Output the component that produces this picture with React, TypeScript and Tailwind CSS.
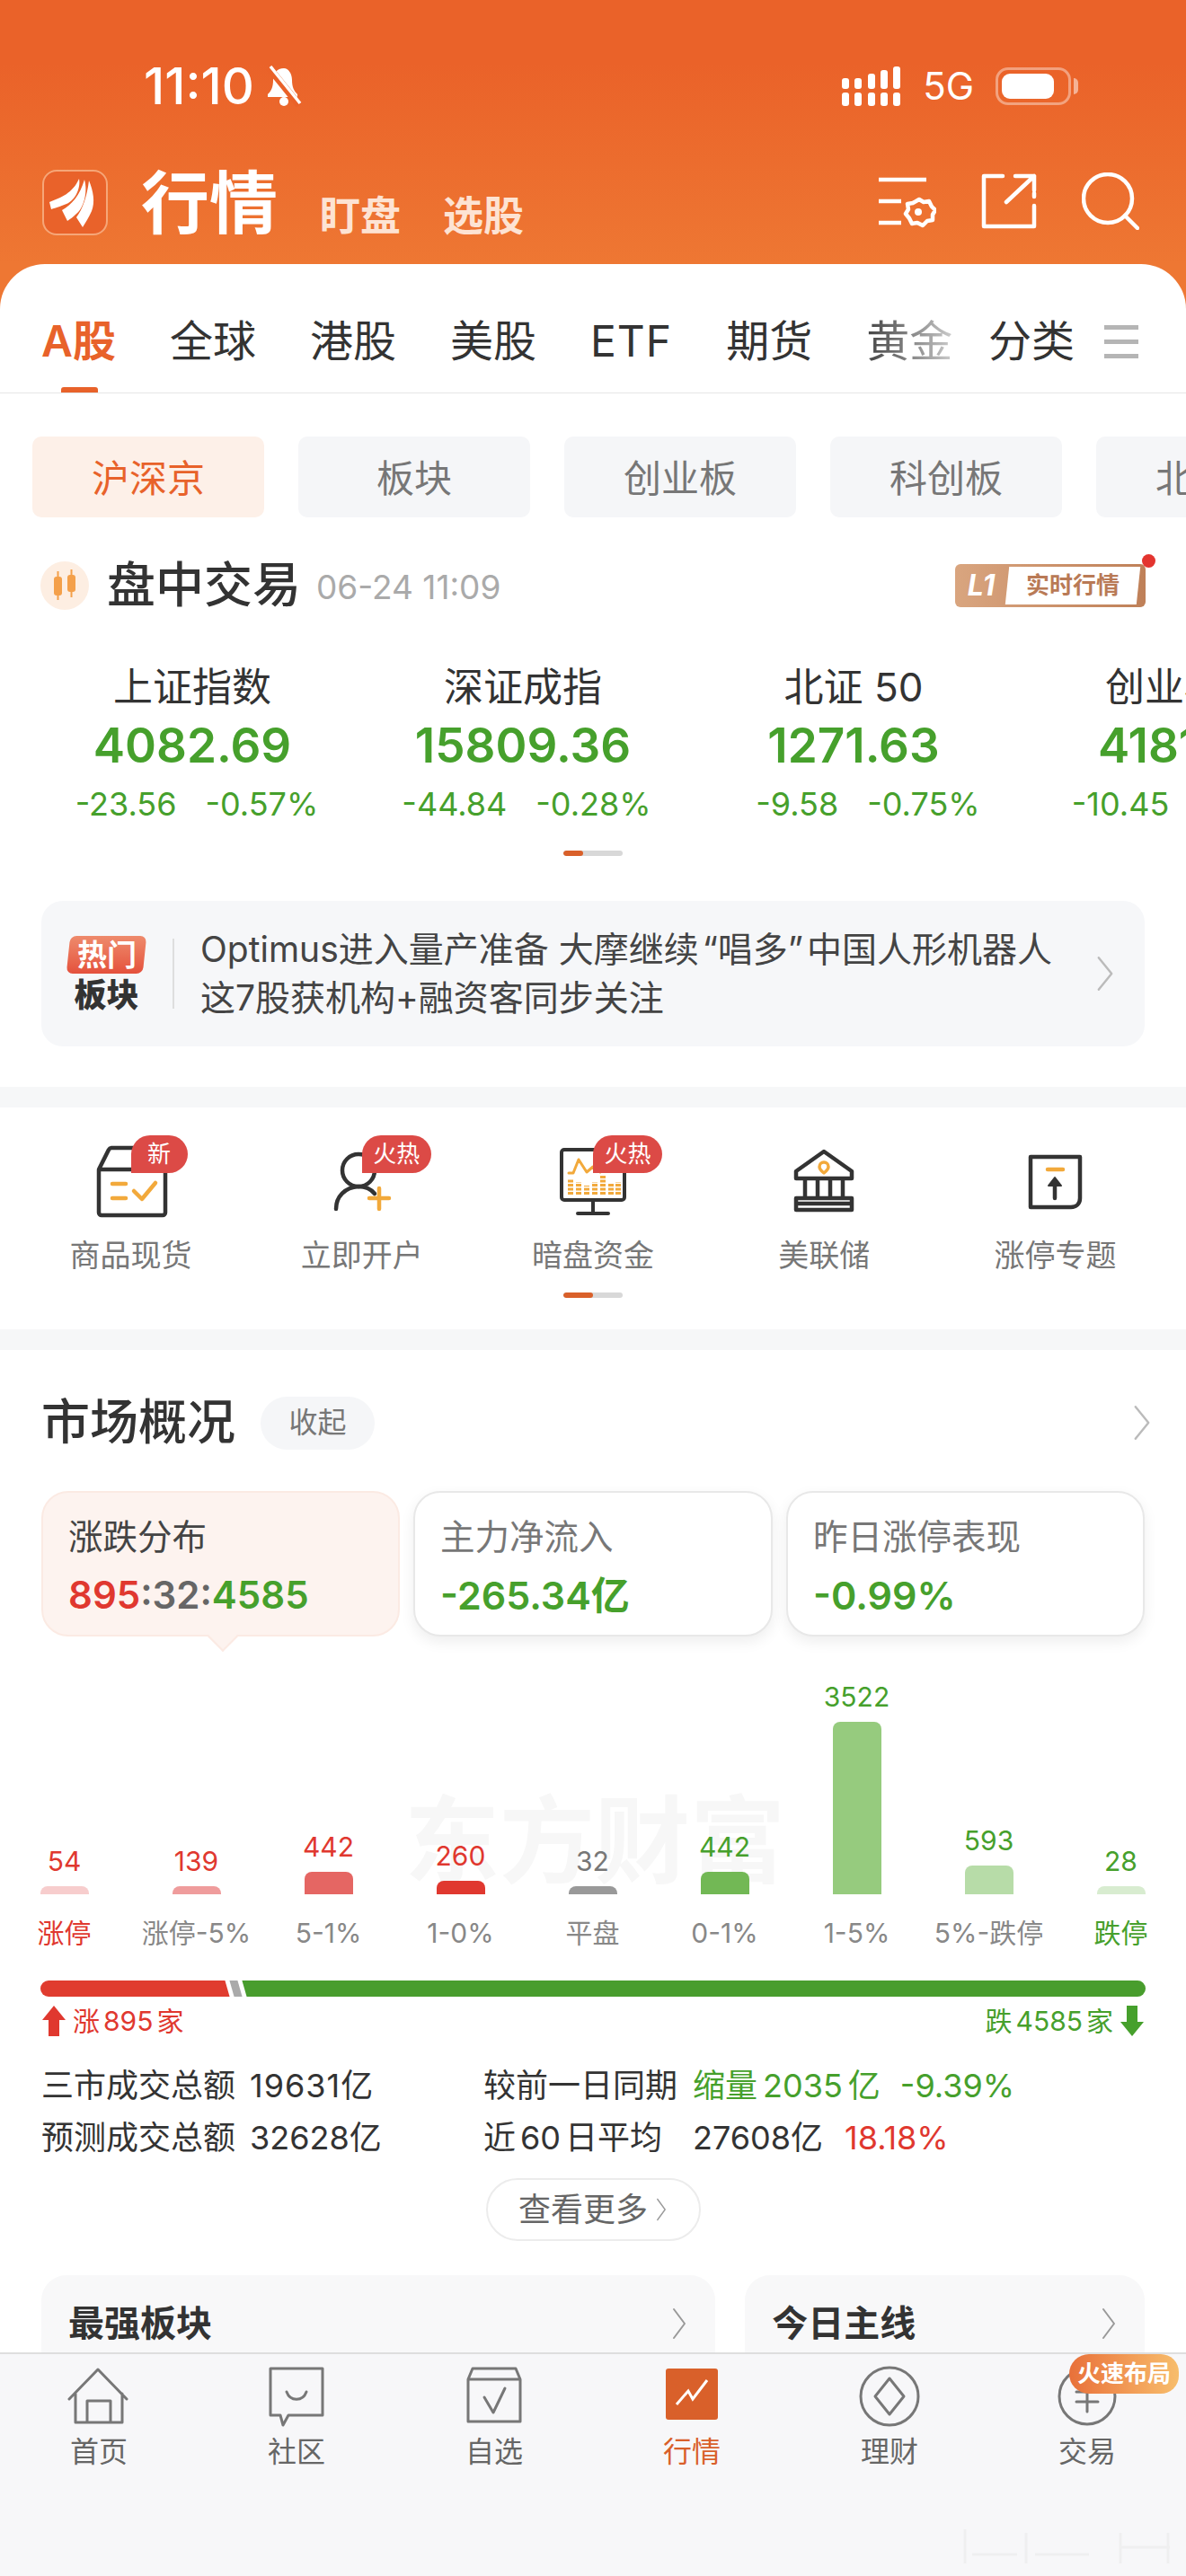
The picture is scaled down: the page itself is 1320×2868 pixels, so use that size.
import React from 'react';

const ChevronRight = ({ className = '' }: { className?: string }) => (
  <svg className={className} viewBox="0 0 20 36" fill="none" stroke="currentColor" strokeWidth="2" strokeLinecap="round" strokeLinejoin="round" preserveAspectRatio="none">
    <path d="M4 2l12 16L4 34" />
  </svg>
);

const Logo = () => (
  <div className="w-[73px] h-[73px] rounded-[16px] border-2 border-[#f6a678] bg-[#e9622a] flex items-center justify-center">
    <svg width="60" height="60" viewBox="0 0 60 60" fill="#fff">
      <path d="M1 29C14 24 27 19 34 3c2 10-4 24-14 28C13 34 6 36 3 37z" />
      <path d="M15 38c11-6 20-17 25-34 4 14-1 32-9 38-3 3-7 6-10 8z" />
      <path d="M31 46c7-9 12-24 14-41 5 12 7 24 3 34-3 7-7 13-10 18z" />
    </svg>
  </div>
);

const StatusBar = () => (
  <div className="h-[180px] pt-[68px] pl-[160px] pr-[120px] flex items-start justify-between text-white">
    <div className="flex items-center h-[56px]">
      <span className="text-[56px] font-medium leading-none">11:10</span>
      <svg className="ml-[10px]" width="46" height="46" viewBox="0 0 46 46" fill="#fff">
        <path d="M23 3c-8 0-12 6-12 13 0 8-2 12-6 16v3h33v-3c-4-4-6-8-6-16 0-7-4-13-9-13z" />
        <circle cx="23" cy="40" r="5" />
        <path d="M6 2l34 42" stroke="#ea6229" strokeWidth="8" />
        <path d="M8 1l33 41" stroke="#fff" strokeWidth="3.5" />
      </svg>
    </div>
    <div className="flex items-center h-[56px]">
      <svg width="66" height="46" viewBox="0 0 66 46" fill="#fff">
        <rect x="0" y="30" width="8" height="15" rx="3" />
        <rect x="0" y="14" width="8" height="12" rx="3" />
        <rect x="14" y="30" width="8" height="15" rx="3" />
        <rect x="14" y="14" width="8" height="12" rx="3" />
        <rect x="29" y="30" width="8" height="15" rx="3" />
        <rect x="29" y="9" width="8" height="17" rx="3" />
        <rect x="43" y="30" width="8" height="15" rx="3" />
        <rect x="43" y="5" width="8" height="21" rx="3" />
        <rect x="57" y="30" width="8" height="15" rx="3" />
        <rect x="57" y="1" width="8" height="25" rx="3" />
      </svg>
      <span className="ml-[24px] text-[42px] leading-none">5G</span>
      <div className="ml-[24px] w-[84px] h-[42px] rounded-[14px] border-[3px] border-white/40 p-[4px]">
        <div className="w-[58px] h-full rounded-[9px] bg-white" />
      </div>
      <div className="ml-[3px] w-[5px] h-[18px] rounded-r-full bg-white/50" />
    </div>
  </div>
);

const HeaderBar = () => (
  <div className="h-[114px] pt-[9px] pl-[47px] pr-[52px] flex items-start justify-between text-white">
    <div className="flex items-start">
      <Logo />
      <span className="ml-[37px] text-[76px] font-semibold leading-[74px]">行情</span>
      <span className="ml-[47px] mt-[27px] text-[45px] font-semibold leading-[50px] text-[#fde3d3]">盯盘</span>
      <span className="ml-[47px] mt-[27px] text-[45px] font-semibold leading-[50px] text-[#fde3d3]">选股</span>
    </div>
    <div className="flex items-center gap-[50px] h-[70px]">
      <svg width="66" height="64" viewBox="0 0 66 64" fill="none" stroke="#fff" strokeWidth="4.5">
        <path d="M2 8h53M2 32h25M2 56h25" />
        <path d="M47 30l5 3 6-1 3 6 4 4-3 5 0 6-6 1-5 5-6-3-6 1-3-6-4-5 3-5-1-6 6-1z" strokeLinejoin="round" />
        <circle cx="46" cy="44" r="4" fill="#fff" stroke="none" />
      </svg>
      <svg width="62" height="62" viewBox="0 0 62 62" fill="none" stroke="#fff" strokeWidth="4.5" strokeLinecap="round" strokeLinejoin="round">
        <path d="M24 3H3v56h56V36M59 26v-4M59 3L28 32M38 3h21v16" />
      </svg>
      <svg width="64" height="64" viewBox="0 0 64 64" fill="none" stroke="#fff" strokeWidth="4.5" strokeLinecap="round">
        <circle cx="29" cy="29" r="27" />
        <path d="M48 48l14 14" />
      </svg>
    </div>
  </div>
);

const MarketTabs = () => (
  <div className="relative h-[144px] rounded-t-[50px] bg-white border-b border-[#e6e6e6] pt-[58px] pl-[46px] overflow-hidden">
    <div className="flex items-center gap-[60px] h-[56px] text-[48px] leading-[56px] text-[#333]">
      <span className="font-semibold text-[#e8622a]">A股</span>
      <span>全球</span>
      <span>港股</span>
      <span>美股</span>
      <span className="tracking-[1px]">ETF</span>
      <span>期货</span>
      <span className="bg-gradient-to-r from-[#444] to-[#ccc] bg-clip-text text-transparent">黄金</span>
    </div>
    <div className="absolute right-0 top-[58px] h-[56px] w-[240px] bg-white flex items-center pl-[20px]">
      <span className="text-[48px] leading-[56px] text-[#333]">分类</span>
      <div className="ml-[33px] flex flex-col gap-[11px]">
        <div className="w-[38px] h-[5px] bg-[#b5b5b5]" />
        <div className="w-[38px] h-[5px] bg-[#b5b5b5]" />
        <div className="w-[38px] h-[5px] bg-[#b5b5b5]" />
      </div>
    </div>
    <div className="absolute left-[68px] bottom-0 w-[41px] h-[6px] rounded-t-[3px] bg-[#e8622a]" />
  </div>
);

const pills = ['沪深京', '板块', '创业板', '科创板', '北交所'];

const Pills = () => (
  <div className="mt-[48px] pl-[36px] flex gap-[38px] overflow-hidden">
    {pills.map((p, i) => (
      <div
        key={p}
        className={`w-[258px] h-[90px] pt-[3px] shrink-0 rounded-[10px] flex items-center justify-center text-[42px] ${
          i === 0 ? 'bg-[#fdf0e8] text-[#e8622a]' : 'bg-[#f5f6f8] text-[#777]'
        }`}
      >
        {p}
      </div>
    ))}
  </div>
);

const TradingHeader = () => (
  <div className="mt-[46px] h-[60px] pl-[45px] pr-[45px] flex items-center justify-between">
    <div className="flex items-center">
      <svg width="54" height="54" viewBox="0 0 54 54">
        <circle cx="27" cy="27" r="27" fill="#fdeee2" />
        <rect x="15" y="17" width="9" height="21" rx="3" fill="#f4a04a" />
        <rect x="18.5" y="11" width="2" height="32" fill="#f4a04a" />
        <rect x="30" y="15" width="9" height="19" rx="3" fill="#f4a04a" />
        <rect x="33.5" y="9" width="2" height="31" fill="#f4a04a" />
      </svg>
      <span className="ml-[20px] text-[54px] font-medium leading-[60px] text-[#333]">盘中交易</span>
      <span className="ml-[17px] mt-[4px] text-[37px] leading-[44px] text-[#aaa]">06-24 11:09</span>
    </div>
    <div className="relative w-[212px] h-[48px] rounded-[6px] bg-gradient-to-r from-[#d9a57f] to-[#bf8058] flex items-center">
      <span className="w-[58px] text-center text-[32px] font-bold italic text-white leading-none">L1</span>
      <div className="w-[146px] h-[42px] bg-white -skew-x-6 flex items-center justify-center">
        <span className="skew-x-6 text-[26px] font-semibold leading-none text-[#b97a56]">实时行情</span>
      </div>
      <div className="absolute -right-[11px] -top-[11px] w-[15px] h-[15px] rounded-full bg-[#e3342f]" />
    </div>
  </div>
);

const indices = [
  { name: '上证指数', value: '4082.69', a: '-23.56', b: '-0.57%', shift: 'pl-[10px]' },
  { name: '深证成指', value: '15809.36', a: '-44.84', b: '-0.28%', shift: 'pl-[8px]' },
  { name: '北证 50', value: '1271.63', a: '-9.58', b: '-0.75%', shift: 'pl-[32px]' },
  { name: '创业板指', value: '4181.67', a: '-10.45', b: '-0.25%', shift: 'pl-[18px]' },
];

const IndexRow = () => (
  <div className="mt-[58px] pl-[30px] flex overflow-hidden">
    {indices.map((x) => (
      <div key={x.name} className="w-[368px] shrink-0 flex flex-col items-center">
        <span className="h-[50px] text-[44px] leading-[50px] text-[#333] whitespace-nowrap">{x.name}</span>
        <span className="mt-[10px] h-[60px] text-[53px] font-semibold leading-[60px] text-[#46a02c]">{x.value}</span>
        <span className={`mt-[15px] h-[40px] text-[36px] leading-[40px] text-[#46a02c] flex gap-[32px] whitespace-nowrap ${x.shift}`}>
          <span>{x.a}</span>
          <span>{x.b}</span>
        </span>
      </div>
    ))}
  </div>
);

const Pager = ({ active, className = '' }: { active: string; className?: string }) => (
  <div className={`mx-auto w-[66px] h-[6px] rounded-full bg-[#d8d8d8] overflow-hidden ${className}`}>
    <div className={`h-full rounded-full bg-[#d9602a] ${active}`} />
  </div>
);

const HotBanner = () => (
  <div className="mt-[50px] mx-[46px] h-[162px] rounded-[24px] bg-[#f6f7f9] flex items-center pl-[30px] pr-[32px]">
    <div className="w-[85px] shrink-0 flex flex-col items-center">
      <div className="relative w-[85px] h-[42px] rounded-[7px] -skew-x-6 bg-gradient-to-b from-[#ee8a6c] to-[#e4503c] flex items-center justify-center">
        <span className="skew-x-6 text-[33px] font-bold leading-none text-white">热门</span>
      </div>
      <span className="mt-[5px] text-[36px] font-black leading-[38px] text-[#333]">板块</span>
    </div>
    <div className="ml-[31px] w-[2px] h-[78px] bg-[#dedede]" />
    <div className="ml-[29px] flex-1 text-[39px] leading-[54px] text-[#444]">
      <div>Optimus进入量产准备 大摩继续<span className="mx-[4px]">“唱多”</span>中国人形机器人</div>
      <div>这7股获机构+融资客同步关注</div>
    </div>
    <ChevronRight className="w-[24px] h-[40px] text-[#bbb]" />
  </div>
);

const Band = () => <div className="h-[23px] bg-[#f6f7f8]" />;

const BoxIcon = () => (
  <svg width="90" height="90" viewBox="0 0 90 90" fill="none" strokeWidth="4.5" strokeLinecap="round" strokeLinejoin="round">
    <path d="M9 32h74v48a3 3 0 0 1-3 3H12a3 3 0 0 1-3-3zM9 32l11-22a4 4 0 0 1 3-2h50" stroke="#333" />
    <path d="M24 48h15M24 64h15M48 56l9 9 15-18" stroke="#f2a93b" />
  </svg>
);

const PersonIcon = () => (
  <svg width="90" height="90" viewBox="0 0 90 90" fill="none" strokeWidth="4.5" strokeLinecap="round">
    <circle cx="41" cy="33" r="18" stroke="#333" />
    <path d="M16 76c0-14 10-24 25-25 7 0 14 3 18 8" stroke="#333" />
    <path d="M64 53v23M53 64h22" stroke="#f2a93b" />
  </svg>
);

const MonitorIcon = () => (
  <svg width="90" height="90" viewBox="0 0 90 90" fill="none" strokeWidth="4" strokeLinecap="round" strokeLinejoin="round">
    <rect x="10" y="10" width="70" height="56" rx="3" stroke="#333" />
    <path d="M45 66v14M28 81h34" stroke="#333" />
    <path d="M18 36h5l6-15 9 14 7-6 8 6" stroke="#f2a93b" strokeWidth="3" />
    <path d="M20 60V42M29 60V46M38 60V50M47 60V46M56 60V38M65 60V48M73 60V46" stroke="#f2a93b" strokeWidth="6" strokeDasharray="3 1.5" strokeLinecap="butt" />
  </svg>
);

const BankIcon = () => (
  <svg width="90" height="90" viewBox="0 0 90 90" fill="none" strokeWidth="4.5" strokeLinecap="round" strokeLinejoin="round">
    <path d="M45 12L14 34v8h62v-8zM24 42v22M38 42v22M52 42v22M66 42v22M14 64h62v13H14zM14 70h62" stroke="#333" />
    <path d="M45 24a5 5 0 0 1 5 5c0 3-5 7-5 7s-5-4-5-7a5 5 0 0 1 5-5z" stroke="#f2a93b" strokeWidth="3.5" />
  </svg>
);

const DocIcon = () => (
  <svg width="90" height="90" viewBox="0 0 90 90" fill="none" strokeWidth="4.5" strokeLinecap="round" strokeLinejoin="round">
    <path d="M18 18h55v46c0 6-4 10-10 10H18z" stroke="#333" />
    <path d="M37 32h17" stroke="#f2a93b" />
    <path d="M45 64V44" stroke="#333" />
    <path d="M38 50l7-9 7 9z" fill="#333" stroke="#333" strokeWidth="2" />
  </svg>
);

const shortcuts = [
  { label: '商品现货', badge: '新', icon: <BoxIcon /> },
  { label: '立即开户', badge: '火热', icon: <PersonIcon /> },
  { label: '暗盘资金', badge: '火热', icon: <MonitorIcon /> },
  { label: '美联储', badge: '', icon: <BankIcon /> },
  { label: '涨停专题', badge: '', icon: <DocIcon /> },
];

const Shortcuts = () => (
  <div className="h-[247px] pt-[31px]">
    <div className="px-[17px] grid grid-cols-5">
      {shortcuts.map((s) => (
        <div key={s.label} className="relative flex flex-col items-center">
          <div className="mt-[6px] h-[90px]">{s.icon}</div>
          <span className="mt-[16px] h-[44px] text-[34px] leading-[44px] text-[#777]">{s.label}</span>
          {s.badge && (
            <div
              className={`absolute left-1/2 top-0 h-[42px] rounded-t-[21px] rounded-br-[21px] bg-[#dc4a46] flex items-center justify-center text-[26px] leading-none text-white ${
                s.badge === '新' ? 'w-[63px]' : 'w-[77px]'
              }`}
            >
              {s.badge}
            </div>
          )}
        </div>
      ))}
    </div>
    <Pager active="w-[33px]" className="mt-[19px]" />
  </div>
);

const OverviewCards = () => (
  <div className="mt-[46px] px-[46px] flex gap-[15px]">
    <div className="relative w-[399px] h-[162px] rounded-[30px] bg-[#fdf3ef] border-2 border-[#fbeae3] pl-[28px] pt-[24px]">
      <div className="text-[38.5px] leading-[50px] text-[#444]">涨跌分布</div>
      <div className="mt-[14px] text-[42px] font-semibold leading-[52px]">
        <span className="text-[#e0382f]">895</span>
        <span className="text-[#666]">:32:</span>
        <span className="text-[#46a02c]">4585</span>
      </div>
      <div className="absolute left-[188px] -bottom-[14px] w-[24px] h-[24px] rotate-45 bg-[#fdf3ef] border-b-2 border-r-2 border-[#fbeae3]" />
    </div>
    <div className="w-[400px] h-[162px] rounded-[30px] bg-white border-2 border-[#e8e8e8] shadow-[0_6px_16px_rgba(0,0,0,0.07)] pl-[28px] pt-[24px]">
      <div className="text-[38.5px] leading-[50px] text-[#777]">主力净流入</div>
      <div className="mt-[14px] text-[43px] font-semibold leading-[52px] text-[#46a02c]">-265.34亿</div>
    </div>
    <div className="w-[399px] h-[162px] rounded-[30px] bg-white border-2 border-[#e8e8e8] shadow-[0_6px_16px_rgba(0,0,0,0.07)] pl-[28px] pt-[24px]">
      <div className="text-[38.5px] leading-[50px] text-[#777]">昨日涨停表现</div>
      <div className="mt-[14px] text-[43px] font-semibold leading-[52px] text-[#46a02c]">-0.99%</div>
    </div>
  </div>
);

const bars = [
  { value: '54', label: '涨停', h: 9, bar: 'bg-[#f7cdcd]', text: 'text-[#e0382f]', labelColor: 'text-[#e0382f]' },
  { value: '139', label: '涨停-5%', h: 9, bar: 'bg-[#ef9c9c]', text: 'text-[#e0382f]', labelColor: 'text-[#888]' },
  { value: '442', label: '5-1%', h: 25, bar: 'bg-[#e56663]', text: 'text-[#e0382f]', labelColor: 'text-[#888]' },
  { value: '260', label: '1-0%', h: 15, bar: 'bg-[#e0382f]', text: 'text-[#e0382f]', labelColor: 'text-[#888]' },
  { value: '32', label: '平盘', h: 9, bar: 'bg-[#999]', text: 'text-[#777]', labelColor: 'text-[#888]' },
  { value: '442', label: '0-1%', h: 25, bar: 'bg-[#72b855]', text: 'text-[#46a02c]', labelColor: 'text-[#888]' },
  { value: '3522', label: '1-5%', h: 192, bar: 'bg-[#96cb7e]', text: 'text-[#46a02c]', labelColor: 'text-[#888]' },
  { value: '593', label: '5%-跌停', h: 32, bar: 'bg-[#b7dca8]', text: 'text-[#46a02c]', labelColor: 'text-[#888]' },
  { value: '28', label: '跌停', h: 9, bar: 'bg-[#d8ecd0]', text: 'text-[#46a02c]', labelColor: 'text-[#46a02c]' },
];

const Chart = () => (
  <>
    <div className="relative h-[287px] w-[1323px] -ml-[2px] grid grid-cols-9 items-end">
      <div className="absolute left-[452px] top-[168px] text-[106px] font-bold leading-[120px] text-[#f7f7f7] whitespace-nowrap">东方财富</div>
      {bars.map((b) => (
        <div key={b.label} className="relative flex flex-col items-center">
          <span className={`h-[36px] mb-[10px] text-[30px] leading-[36px] ${b.text}`}>{b.value}</span>
          <div className={`w-[54px] rounded-t-[8px] ${b.bar}`} style={{ height: b.h }} />
        </div>
      ))}
    </div>
    <div className="mt-[23px] h-[40px] w-[1323px] -ml-[2px] grid grid-cols-9">
      {bars.map((b) => (
        <span key={b.label} className={`text-center text-[30px] leading-[40px] whitespace-nowrap ${b.labelColor}`}>{b.label}</span>
      ))}
    </div>
  </>
);

const BreadthBar = () => (
  <>
    <div className="mt-[33px] mx-[45px] h-[18px] flex rounded-full overflow-hidden">
      <div className="-ml-[10px] w-[218px] shrink-0 bg-[#e03c2f] skew-x-[16deg]" />
      <div className="ml-[5px] w-[9px] shrink-0 bg-[#aaa] skew-x-[16deg]" />
      <div className="ml-[5px] flex-1 -mr-[10px] bg-[#489d2d] skew-x-[16deg]" />
    </div>
    <div className="mt-[7px] mx-[47px] h-[40px] flex items-center justify-between text-[30px] leading-[40px]">
      <div className="flex items-center text-[#e0382f]">
        <svg width="26" height="34" viewBox="0 0 26 34" fill="currentColor"><path d="M13 0l13 16h-7v18H7V16H0z" /></svg>
        <span className="ml-[8px]">涨<span className="mx-[4px]">895</span>家</span>
      </div>
      <div className="flex items-center text-[#46a02c]">
        <span className="mr-[8px]">跌<span className="mx-[4px]">4585</span>家</span>
        <svg width="26" height="34" viewBox="0 0 26 34" fill="currentColor"><path d="M13 34L0 18h7V0h12v18h7z" /></svg>
      </div>
    </div>
  </>
);

const Turnover = () => (
  <div className="mt-[28px] pl-[46px] text-[36px] leading-[48px] text-[#333] grid grid-cols-[232px_260px_233px_1fr] gap-y-[10px]">
    <span>三市成交总额</span>
    <span className="tracking-[1px]">19631亿</span>
    <span>较前一日同期</span>
    <span className="text-[#46a02c] whitespace-nowrap">缩量<span className="mx-[6px]">2035</span>亿<span className="ml-[22px]">-9.39%</span></span>
    <span>预测成交总额</span>
    <span>32628亿</span>
    <span>近<span className="mx-[5px]">60</span>日平均</span>
    <span className="whitespace-nowrap">27608亿<span className="ml-[24px] text-[#e0382f]">18.18%</span></span>
  </div>
);

const MarketOverview = () => (
  <div className="relative">
    <div className="pt-[51px] h-[111px] pl-[46px] pr-[37px] flex items-start justify-between">
      <div className="flex items-center h-[60px]">
        <span className="text-[54px] font-medium leading-[60px] text-[#333]">市场概况</span>
        <span className="ml-[28px] w-[127px] h-[59px] rounded-full bg-[#f5f6f8] flex items-center justify-center text-[32px] text-[#777]">收起</span>
      </div>
      <ChevronRight className="w-[24px] h-[40px] mt-[10px] text-[#bbb]" />
    </div>
    <OverviewCards />
    <Chart />
    <BreadthBar />
    <Turnover />
    <div className="mt-[21px] mx-auto w-[239px] h-[70px] rounded-full border-2 border-[#ececec] flex items-center justify-center text-[36px] text-[#666]">
      查看更多
      <ChevronRight className="ml-[8px] w-[14px] h-[26px] text-[#999]" />
    </div>
    <div className="mt-[38px] px-[46px] flex gap-[33px]">
      <div className="w-[751px] h-[120px] rounded-[28px] bg-[#f8f8f9] pl-[30px] pr-[30px] pt-[28px] flex items-start justify-between">
        <span className="text-[40px] font-semibold leading-[52px] text-[#333]">最强板块</span>
        <ChevronRight className="w-[20px] h-[36px] mt-[8px] text-[#999]" />
      </div>
      <div className="w-[445px] h-[120px] rounded-[28px] bg-[#f8f8f9] pl-[30px] pr-[30px] pt-[28px] flex items-start justify-between">
        <span className="text-[40px] font-semibold leading-[52px] text-[#333]">今日主线</span>
        <ChevronRight className="w-[20px] h-[36px] mt-[8px] text-[#999]" />
      </div>
    </div>
  </div>
);

const navStroke = { fill: 'none', stroke: '#777', strokeWidth: 3, strokeLinejoin: 'round' as const, strokeLinecap: 'round' as const };

const navItems = [
  {
    label: '首页',
    icon: (
      <svg width="70" height="70" viewBox="0 0 70 70" {...navStroke}>
        <path d="M2 38L34 5l32 33M9 32v32h52V32M22 64V40h26v24" />
      </svg>
    ),
  },
  {
    label: '社区',
    icon: (
      <svg width="70" height="70" viewBox="0 0 70 70" {...navStroke}>
        <path d="M6 4h58v52H26l-6 11-3-11H6z" />
        <path d="M24 30c4 11 18 11 22 0" />
      </svg>
    ),
  },
  {
    label: '自选',
    icon: (
      <svg width="70" height="70" viewBox="0 0 70 70" {...navStroke}>
        <path d="M6 16l5-12h48l5 12M6 16h58v47H6zM24 36l10 17 13-27" />
      </svg>
    ),
  },
  {
    label: '行情',
    active: true,
    icon: (
      <svg width="70" height="70" viewBox="0 0 70 70">
        <rect x="6" y="4" width="58" height="57" rx="3" fill="#d9602a" />
        <path d="M18 44l13-15 5 9 16-21" fill="none" stroke="#fff" strokeWidth="3" />
      </svg>
    ),
  },
  {
    label: '理财',
    icon: (
      <svg width="70" height="70" viewBox="0 0 70 70" {...navStroke}>
        <circle cx="35" cy="35" r="32" />
        <path d="M35 15l16 20-16 20-16-20z" />
      </svg>
    ),
  },
  {
    label: '交易',
    icon: (
      <svg width="70" height="70" viewBox="0 0 70 70" {...navStroke}>
        <circle cx="35" cy="35" r="31" />
        <path d="M23 30h24M23 41h24M35 24v28" />
      </svg>
    ),
  },
];

const BottomNav = () => (
  <div className="relative h-[249px] shrink-0 bg-[#f7f7f9] border-t-2 border-[#dedede] grid grid-cols-6 items-start pt-[12px]">
    {navItems.map((n) => (
      <div key={n.label} className="flex flex-col items-center">
        <div className="h-[70px]">{n.icon}</div>
        <span className={`mt-[7px] text-[32px] leading-[40px] ${n.active ? 'text-[#d9602a]' : 'text-[#666]'}`}>{n.label}</span>
      </div>
    ))}
    <div className="absolute left-[1190px] top-0 w-[122px] h-[44px] rounded-l-[22px] rounded-r-[20px] bg-gradient-to-r from-[#e8703a] to-[#f7bd6c] flex items-center justify-center text-[26px] font-semibold leading-none text-white">
      火速布局
    </div>
    <svg className="absolute right-[8px] bottom-[12px] opacity-40" width="270" height="42" viewBox="0 0 270 42" fill="none" stroke="#e4e4e4" strokeWidth="3">
      <path d="M32 2v38M100 6v34M205 6v34M258 6v34M205 22h55M40 30h50M110 30h60" />
    </svg>
  </div>
);

export default function App() {
  return (
    <div className="w-[1320px] h-[2868px] flex flex-col overflow-hidden bg-white font-['Inter','Noto_Sans_CJK_SC',sans-serif]">
      <div className="flex-1 min-h-0 overflow-hidden">
        <div className="bg-[linear-gradient(#ea6229_0,#ea6229_70px,#ee7733_294px,#ee7733_100%)]">
          <StatusBar />
          <HeaderBar />
          <MarketTabs />
        </div>
        <Pills />
        <TradingHeader />
        <IndexRow />
        <Pager active="w-[22px]" className="mt-[32px]" />
        <HotBanner />
        <div className="h-[45px]" />
        <Band />
        <Shortcuts />
        <Band />
        <MarketOverview />
      </div>
      <BottomNav />
    </div>
  );
}
